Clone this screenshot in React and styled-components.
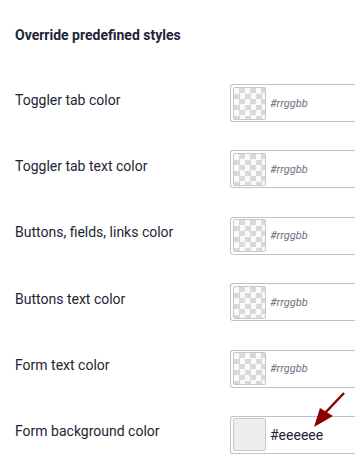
import React from "react";
import styled, { createGlobalStyle } from "styled-components";

const Global = createGlobalStyle`
  body {
    margin: 0;
    background: #fff;
    font-family: Roboto, "Liberation Sans", sans-serif;
    color: #1f2937;
  }
`;

const Page = styled.div`
  padding: 27px 0 0 15px;
  width: 355px;
  height: 460px;
  box-sizing: border-box;
  overflow: hidden;
`;

const Heading = styled.h3`
  margin: 0;
  font-size: 14px;
  font-weight: 700;
  line-height: 17px;
  color: #1d2535;
`;

const Rows = styled.div`
  display: flex;
  flex-direction: column;
  gap: 28.4px;
  margin-top: 40px;
`;

const Row = styled.div`
  display: grid;
  grid-template-columns: 215px 140px;
  align-items: center;
  height: 38px;
`;

const Label = styled.div`
  font-size: 14px;
  color: #1d2535;
  margin-top: -7px;
`;

const ColorField = styled.div`
  position: relative;
  display: flex;
  align-items: center;
  gap: 4px;
  height: 38px;
  box-sizing: border-box;
  border: 1px solid #b9c4d6;
  border-right: none;
  border-radius: 3px 0 0 3px;
  padding-left: 2px;
`;

const Swatch = styled.div`
  width: 33px;
  height: 33px;
  box-sizing: border-box;
  border: 1px solid #c8c8c8;
  border-radius: 2px;
  background: ${(p) =>
    p.color
      ? p.color
      : "repeating-conic-gradient(#d9d9d9 0% 25%, #fafafa 0% 50%) 0 0 / 11px 11px"};
`;

const Value = styled.span`
  font-size: ${(p) => (p.placeholder ? "11px" : "14px")};
  font-style: ${(p) => (p.placeholder ? "italic" : "normal")};
  color: ${(p) => (p.placeholder ? "#6b7280" : "#1d2535")};
`;

const Arrow = styled.svg`
  position: absolute;
  left: 78px;
  top: -25px;
  overflow: visible;
`;

const rows = [
  "Toggler tab color",
  "Toggler tab text color",
  "Buttons, fields, links color",
  "Buttons text color",
  "Form text color",
];

export default function App() {
  return (
    <Page>
      <Global />
      <Heading>Override predefined styles</Heading>
      <Rows>
        {rows.map((r) => (
          <Row key={r}>
            <Label>{r}</Label>
            <ColorField>
              <Swatch />
              <Value placeholder>#rrggbb</Value>
            </ColorField>
          </Row>
        ))}
        <Row>
          <Label>Form background color</Label>
          <ColorField>
            <Swatch color="#eeeeee" />
            <Value>#eeeeee</Value>
            <Arrow width="40" height="40" viewBox="0 0 40 40">
              <line x1="35" y1="1" x2="16" y2="21" stroke="#8b0000" strokeWidth="2.5" />
              <polygon points="5,35 11,16 24,24" fill="#8b0000" />
            </Arrow>
          </ColorField>
        </Row>
      </Rows>
    </Page>
  );
}
